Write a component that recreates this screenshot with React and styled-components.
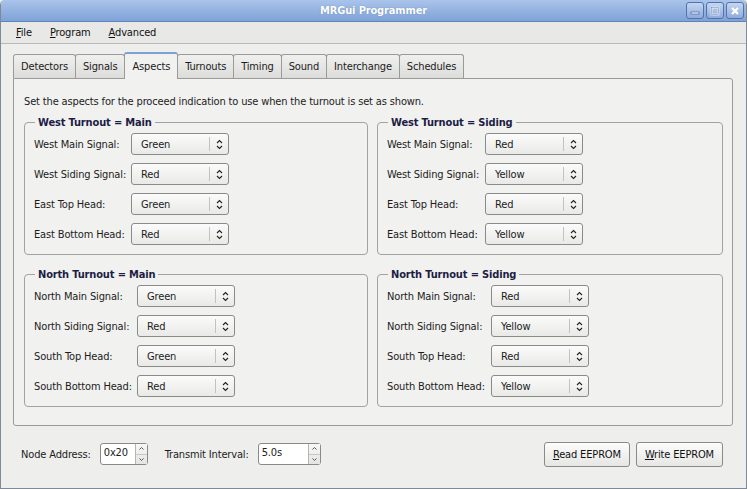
import styled, { createGlobalStyle } from "styled-components";

const GlobalStyle = createGlobalStyle`
body {
  margin: 0;
  background: #eeeeec;
  font-family: "DejaVu Sans Condensed", "DejaVu Sans", Verdana, sans-serif;
  font-stretch: condensed;
  font-size: 11px;
  letter-spacing: -0.15px;
  color: #1c1c1c;
}
`;

const Frame = styled.div`
width: 747px;
height: 489px;
box-sizing: border-box;
display: flex;
flex-direction: column;
background: #eeeeec;
border: 1px solid #7f8a99;
border-top: none;
border-radius: 5px 5px 0 0;
overflow: hidden;
`;

const TitleBar = styled.div`
height: 21px;
flex: none;
display: flex;
align-items: center;
justify-content: center;
position: relative;
background: linear-gradient(#aac4ea, #7fa2d7);
border-bottom: 1px solid #5f83bd;
color: #fff;
font-weight: bold;
font-size: 11px;
text-shadow: 0 0 1px #5b7ab0;
`;

const WinButtons = styled.div`
position: absolute;
right: 2px;
top: 2px;
display: flex;
gap: 2px;
`;

const WinButton = styled.div`
width: 16px;
height: 15px;
border: 1px solid #5173ad;
border-radius: 3px;
background: linear-gradient(#c6d6f0, #8fabdc);
display: flex;
align-items: center;
justify-content: center;
`;

const MenuBar = styled.div`
height: 21px;
flex: none;
display: flex;
align-items: center;
padding-left: 15px;
background: #e8e8e6;
border-bottom: 1px solid #b9b9b7;
`;

const MenuItem = styled.span`
margin-right: 18px;
color: #111;
`;

const Body = styled.div`
flex: 1;
display: flex;
flex-direction: column;
padding: 8px 13px 0 12px;
`;

const TabBar = styled.div`
display: flex;
align-items: flex-end;
height: 26px;
`;

const Tab = styled.div`
height: ${p => (p.$active ? "27px" : "24px")};
box-sizing: border-box;
padding: 0 7px;
display: flex;
align-items: center;
justify-content: center;
border: 1px solid #9a9a98;
border-bottom: none;
border-radius: 3px 3px 0 0;
margin-left: -1px;
background: ${p => (p.$active ? "#f1f1ef" : "linear-gradient(#f0f0ee, #dcdcda)")};
border-top: ${p => (p.$active ? "2px solid #7ba2d6" : "1px solid #9a9a98")};
position: relative;
z-index: ${p => (p.$active ? 2 : 1)};
margin-bottom: ${p => (p.$active ? "-1px" : "0")};
&:first-child { margin-left: 0; }
`;

const Pane = styled.div`
height: 348px;
flex: none;
box-sizing: border-box;
border: 1px solid #9a9a98;
border-radius: 0 3px 3px 3px;
background: #f1f1ef;
padding: 16px 10px 0 10px;
display: flex;
flex-direction: column;
`;

const Intro = styled.div`
margin-bottom: 8px;
`;

const Grid = styled.div`
display: grid;
grid-template-columns: 344px 346px;
column-gap: 9px;
row-gap: 13px;
`;

const Group = styled.fieldset`
margin: 0;
padding: 4px 9px 9px 9px;
border: 1px solid #a2a2a0;
border-radius: 4px;
display: flex;
flex-direction: column;
gap: 8px;
min-width: 0;
`;

const Legend = styled.legend`
font-weight: bold;
color: #1d1d45;
padding: 0 3px;
margin-left: 1px;
`;

const Row = styled.div`
display: flex;
align-items: center;
height: 22px;
`;

const Label = styled.span`
width: ${p => p.$w}px;
flex: none;
white-space: nowrap;
`;

const Combo = styled.div`
width: 98px;
height: 22px;
box-sizing: border-box;
border: 1px solid #8a8a88;
border-radius: 3px;
background: linear-gradient(#fbfbfb, #e9e9e7);
display: flex;
align-items: center;
`;

const ComboText = styled.span`
flex: 1;
padding-left: 9px;
`;

const ComboArrow = styled.span`
width: 18px;
height: 14px;
border-left: 1px solid #c2c2c0;
display: flex;
align-items: center;
justify-content: center;
`;

const Footer = styled.div`
flex: 1;
display: flex;
align-items: center;
padding: 0 10px 6px 8px;
`;

const SpinLabel = styled.span`
margin-right: 9px;
white-space: nowrap;
`;

const Spin = styled.div`
width: ${p => p.$w}px;
height: 22px;
box-sizing: border-box;
border: 1px solid #8a8a88;
border-radius: 3px;
background: #fff;
display: flex;
margin-right: 17px;
`;

const SpinText = styled.span`
flex: 1;
padding-left: 3px;
line-height: 18px;
`;

const SpinButtons = styled.div`
width: 11px;
display: flex;
flex-direction: column;
border-left: 1px solid #b5b5b3;
background: linear-gradient(#f8f8f8, #e4e4e2);
`;

const SpinHalf = styled.div`
flex: 1;
display: flex;
align-items: center;
justify-content: center;
& + & { border-top: 1px solid #c8c8c6; }
`;

const Spacer = styled.div`
flex: 1;
`;

const Button = styled.button`
height: 25px;
padding: 0 8px;
margin-left: 6px;
font: inherit;
letter-spacing: inherit;
color: #111;
border: 1px solid #8a8a88;
border-radius: 3px;
background: linear-gradient(#fcfcfc, #e6e6e4);
`;

function UpDown() {
  return (
    <svg width="7" height="11" viewBox="0 0 7 11">
      <path d="M1 4 L3.5 1.5 L6 4 M1 7 L3.5 9.5 L6 7" fill="none" stroke="#222" strokeWidth="1.1" />
    </svg>
  );
}

function Chevron({ up }) {
  return (
    <svg width="5" height="3" viewBox="0 0 5 3">
      <path d={up ? "M0.5 2.5 L2.5 0.5 L4.5 2.5" : "M0.5 0.5 L2.5 2.5 L4.5 0.5"} fill="none" stroke="#555" strokeWidth="1" />
    </svg>
  );
}

function Select({ value }) {
  return (
    <Combo>
      <ComboText>{value}</ComboText>
      <ComboArrow><UpDown /></ComboArrow>
    </Combo>
  );
}

function SpinBox({ value, w }) {
  return (
    <Spin $w={w}>
      <SpinText>{value}</SpinText>
      <SpinButtons>
        <SpinHalf><Chevron up /></SpinHalf>
        <SpinHalf><Chevron /></SpinHalf>
      </SpinButtons>
    </Spin>
  );
}

function AspectGroup({ title, rows, labelWidth }) {
  return (
    <Group>
      <Legend>{title}</Legend>
      {rows.map(([label, value]) => (
        <Row key={label}>
          <Label $w={labelWidth}>{label}</Label>
          <Select value={value} />
        </Row>
      ))}
    </Group>
  );
}

const tabs = ["Detectors", "Signals", "Aspects", "Turnouts", "Timing", "Sound", "Interchange", "Schedules"];

export default function App() {
  return (
    <>
      <GlobalStyle />
      <Frame>
        <TitleBar>
          MRGui Programmer
          <WinButtons>
            <WinButton>
              <svg width="10" height="10" viewBox="0 0 10 10"><rect x="1" y="6" width="8" height="2" fill="#fff" stroke="#4d6fa8" strokeWidth="0.8" /></svg>
            </WinButton>
            <WinButton>
              <svg width="10" height="10" viewBox="0 0 10 10"><rect x="1.5" y="1.5" width="7" height="7" fill="none" stroke="#fff" strokeWidth="1.6" /><rect x="1.5" y="1.5" width="7" height="7" fill="none" stroke="#4d6fa8" strokeWidth="0.5" /></svg>
            </WinButton>
            <WinButton>
              <svg width="10" height="10" viewBox="0 0 10 10"><path d="M2 2 L8 8 M8 2 L2 8" stroke="#fff" strokeWidth="2.2" /></svg>
            </WinButton>
          </WinButtons>
        </TitleBar>
        <MenuBar>
          <MenuItem><u>F</u>ile</MenuItem>
          <MenuItem><u>P</u>rogram</MenuItem>
          <MenuItem><u>A</u>dvanced</MenuItem>
        </MenuBar>
        <Body>
          <TabBar>
            {tabs.map(t => (
              <Tab key={t} $active={t === "Aspects"}>{t}</Tab>
            ))}
          </TabBar>
          <Pane>
            <Intro>Set the aspects for the proceed indication to use when the turnout is set as shown.</Intro>
            <Grid>
              <AspectGroup
                title="West Turnout = Main"
                labelWidth={97}
                rows={[["West Main Signal:", "Green"], ["West Siding Signal:", "Red"], ["East Top Head:", "Green"], ["East Bottom Head:", "Red"]]}
              />
              <AspectGroup
                title="West Turnout = Siding"
                labelWidth={98}
                rows={[["West Main Signal:", "Red"], ["West Siding Signal:", "Yellow"], ["East Top Head:", "Red"], ["East Bottom Head:", "Yellow"]]}
              />
              <AspectGroup
                title="North Turnout = Main"
                labelWidth={103}
                rows={[["North Main Signal:", "Green"], ["North Siding Signal:", "Red"], ["South Top Head:", "Green"], ["South Bottom Head:", "Red"]]}
              />
              <AspectGroup
                title="North Turnout = Siding"
                labelWidth={104}
                rows={[["North Main Signal:", "Red"], ["North Siding Signal:", "Yellow"], ["South Top Head:", "Red"], ["South Bottom Head:", "Yellow"]]}
              />
            </Grid>
          </Pane>
          <Footer>
            <SpinLabel>Node Address:</SpinLabel>
            <SpinBox value="0x20" w={48} />
            <SpinLabel>Transmit Interval:</SpinLabel>
            <SpinBox value="5.0s" w={63} />
            <Spacer />
            <Button><u>R</u>ead EEPROM</Button>
            <Button><u>W</u>rite EEPROM</Button>
          </Footer>
        </Body>
      </Frame>
    </>
  );
}
